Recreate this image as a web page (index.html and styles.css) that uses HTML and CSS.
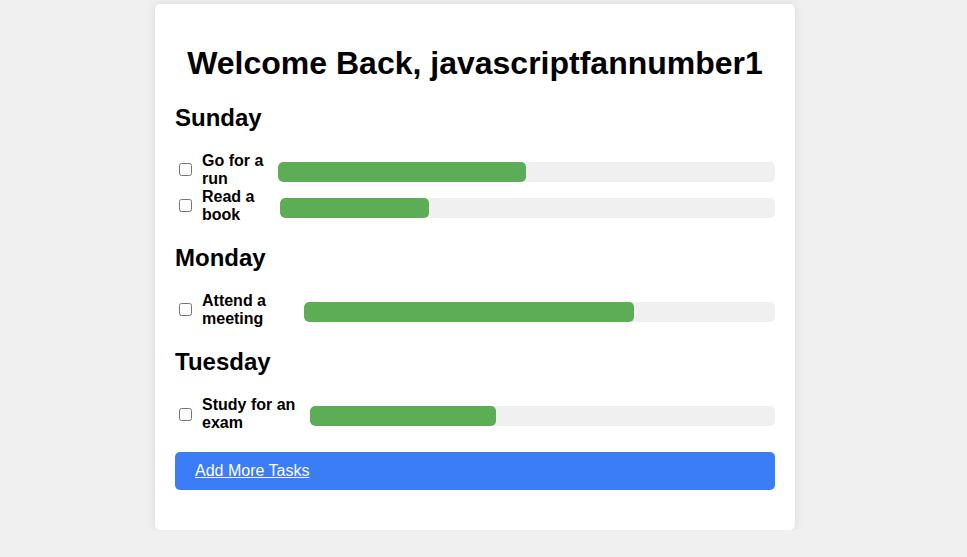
FILE: index.html
```html
<!DOCTYPE html>
<html>
<head>
<meta charset="utf-8">
<link rel="stylesheet" href="styles.css">
</head>
<body>
<div class="page">
  <div class="card">
    <h1 class="title">Welcome Back, javascriptfannumber1</h1>

    <h2 class="day">Sunday</h2>
    <div class="task">
      <input type="checkbox" class="check">
      <label class="label">Go for a run</label>
      <div class="bar"><div class="fill" style="width:50%"></div></div>
    </div>
    <div class="task">
      <input type="checkbox" class="check">
      <label class="label">Read a book</label>
      <div class="bar"><div class="fill" style="width:30%"></div></div>
    </div>

    <h2 class="day">Monday</h2>
    <div class="task">
      <input type="checkbox" class="check">
      <label class="label">Attend a meeting</label>
      <div class="bar"><div class="fill" style="width:70%"></div></div>
    </div>

    <h2 class="day day-last">Tuesday</h2>
    <div class="task">
      <input type="checkbox" class="check">
      <label class="label">Study for an exam</label>
      <div class="bar"><div class="fill" style="width:40%"></div></div>
    </div>

    <a href="#" class="add">Add More Tasks</a>
  </div>
</div>
</body>
</html>
```
FILE: styles.css
```css
html, body {
  margin: 0;
  padding: 0;
}
body {
  background: #f0f0f0;
  font-family: "Liberation Sans", Arial, sans-serif;
  color: #000;
}
.page {
  display: flex;
  justify-content: center;
  padding: 4px 17px 0 0;
}
.card {
  width: 600px;
  padding: 20px;
  background: #fff;
  border-radius: 5px;
  box-shadow: 0 0 10px rgba(0, 0, 0, 0.1);
}
.title {
  font-size: 32px;
  text-align: center;
  margin: 21.44px 0;
}
.day {
  font-size: 24px;
  margin: 19.92px 0;
}
.day-last {
  margin-bottom: 20.6px;
}
.task {
  display: flex;
  align-items: center;
}
.check {
  width: 13px;
  height: 13px;
  margin: 3px 10px 3px 4px;
  flex: none;
}
.label {
  font-size: 16px;
  font-weight: bold;
  line-height: 18px;
}
.bar {
  width: 100%;
  height: 20px;
  margin-top: 4px;
  background: #f0f0f0;
  border-radius: 5px;
  overflow: hidden;
}
.fill {
  height: 100%;
  background: #5cad56;
  border-radius: 5px;
}
.add {
  display: block;
  margin: 19.5px 0 20px;
  padding: 10px 20px;
  background: #3b7cf7;
  color: #fff;
  font-size: 16px;
  line-height: 18px;
  border-radius: 5px;
  text-decoration: underline;
}
```
